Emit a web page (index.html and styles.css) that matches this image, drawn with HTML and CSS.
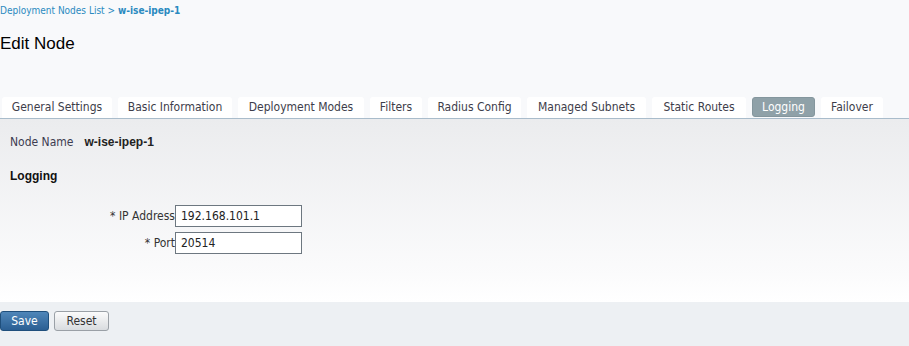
FILE: index.html
```html
<!DOCTYPE html>
<html lang="en">

<head>
    <meta charset="UTF-8">
    <title>Edit Node</title>
    <link rel="stylesheet" href="styles.css">
</head>

<body>
    <div class="page">
        <div class="crumbs">
            <a href="#" class="crumbLink">Deployment Nodes List</a> &gt; <b>w-ise-ipep-1</b>
        </div>
        <h1 class="title">Edit Node</h1>

        <div class="tabs">
            <div class="tab t1">General Settings</div>
            <div class="tab t2">Basic Information</div>
            <div class="tab t3">Deployment Modes</div>
            <div class="tab t4">Filters</div>
            <div class="tab t5">Radius Config</div>
            <div class="tab t6">Managed Subnets</div>
            <div class="tab t7">Static Routes</div>
            <div class="tab t8 active">Logging</div>
            <div class="tab t9">Failover</div>
        </div>

        <div class="content">
            <div class="nodeRow">
                <span class="nodeLabel">Node Name</span>
                <span class="nodeValue">w-ise-ipep-1</span>
            </div>
            <h2 class="section">Logging</h2>

            <div class="form">
                <div class="field">
                    <label class="label">* IP Address</label>
                    <input class="input" type="text" value="192.168.101.1">
                </div>
                <div class="field">
                    <label class="label">* Port</label>
                    <input class="input" type="text" value="20514">
                </div>
            </div>
        </div>

        <div class="footer">
            <button class="btn save">Save</button>
            <button class="btn reset">Reset</button>
        </div>
    </div>
</body>

</html>
```

FILE: styles.css
```css
* {
    box-sizing: border-box;
    padding: 0;
    margin: 0;
}

body {
    background-color: #f8f9fb;
    font-family: "DejaVu Sans Condensed", "DejaVu Sans", sans-serif;
    font-size: 12px;
    color: #333;
}

.page {
    width: 909px;
    height: 346px;
    display: flex;
    flex-direction: column;
}

.crumbs {
    font-size: 10px;
    color: #2a8ac0;
    padding-top: 5px;
    height: 20px;
}

.crumbLink {
    color: #2a8ac0;
    text-decoration: none;
}

.title {
    font-family: "Liberation Sans", Arial, sans-serif;
    font-size: 17px;
    font-weight: normal;
    color: #000;
    padding-top: 14px;
    height: 77px;
}

.tabs {
    display: flex;
    gap: 6px;
    padding-left: 2px;
    height: 22px;
    border-bottom: 1px solid #a9bccb;
}

.tab {
    background-color: #fff;
    border-radius: 3px 3px 0 0;
    height: 21px;
    line-height: 20px;
    text-align: center;
    color: #3d3d4a;
}

.t1 { width: 110px; }
.t2 { width: 114px; }
.t3 { width: 126px; }
.t4 { width: 52px; }
.t5 { width: 93px; }
.t6 { width: 119px; }
.t7 { width: 94px; }
.t8 { width: 63px; }
.t9 { width: 62px; }

.tab.active {
    background-color: #8fa1a8;
    color: #fff;
    border-radius: 3px;
    height: 20px;
    line-height: 18px;
    border: 1px solid #84969d;
}

.content {
    height: 183px;
    background: linear-gradient(#ebecee, #fbfbfc 85%, #ffffff);
    padding: 16px 10px 0 10px;
}

.nodeRow {
    display: flex;
    gap: 11px;
    height: 22px;
}

.nodeLabel {
    color: #3c3c50;
}

.nodeValue {
    font-family: "Liberation Sans", Arial, sans-serif;
    font-weight: bold;
    color: #222;
}

.section {
    font-family: "Liberation Sans", Arial, sans-serif;
    font-size: 12px;
    font-weight: bold;
    color: #111;
    margin-top: 12px;
    height: 36px;
}

.form {
    display: flex;
    flex-direction: column;
    gap: 5px;
}

.field {
    display: flex;
    align-items: center;
}

.label {
    width: 165px;
    text-align: right;
    color: #333;
}

.input {
    width: 127px;
    height: 22px;
    border: 1px solid #6d7780;
    background: #fff;
    font-family: "DejaVu Sans Condensed", "DejaVu Sans", sans-serif;
    font-size: 12px;
    color: #222;
    padding-left: 5px;
}

.footer {
    flex: 1;
    background-color: #edf0f3;
    display: flex;
    gap: 5px;
    padding-top: 9px;
    align-items: flex-start;
}

.btn {
    height: 20px;
    font-family: "DejaVu Sans Condensed", "DejaVu Sans", sans-serif;
    font-size: 12px;
    border-radius: 3px;
    cursor: pointer;
}

.save {
    width: 49px;
    color: #fff;
    border: 1px solid #1f4f7c;
    background: linear-gradient(#4f86b9, #2b5f93);
}

.reset {
    width: 55px;
    color: #333;
    border: 1px solid #9aa0a6;
    background: linear-gradient(#fbfbfb, #d9dcdf);
}
```
